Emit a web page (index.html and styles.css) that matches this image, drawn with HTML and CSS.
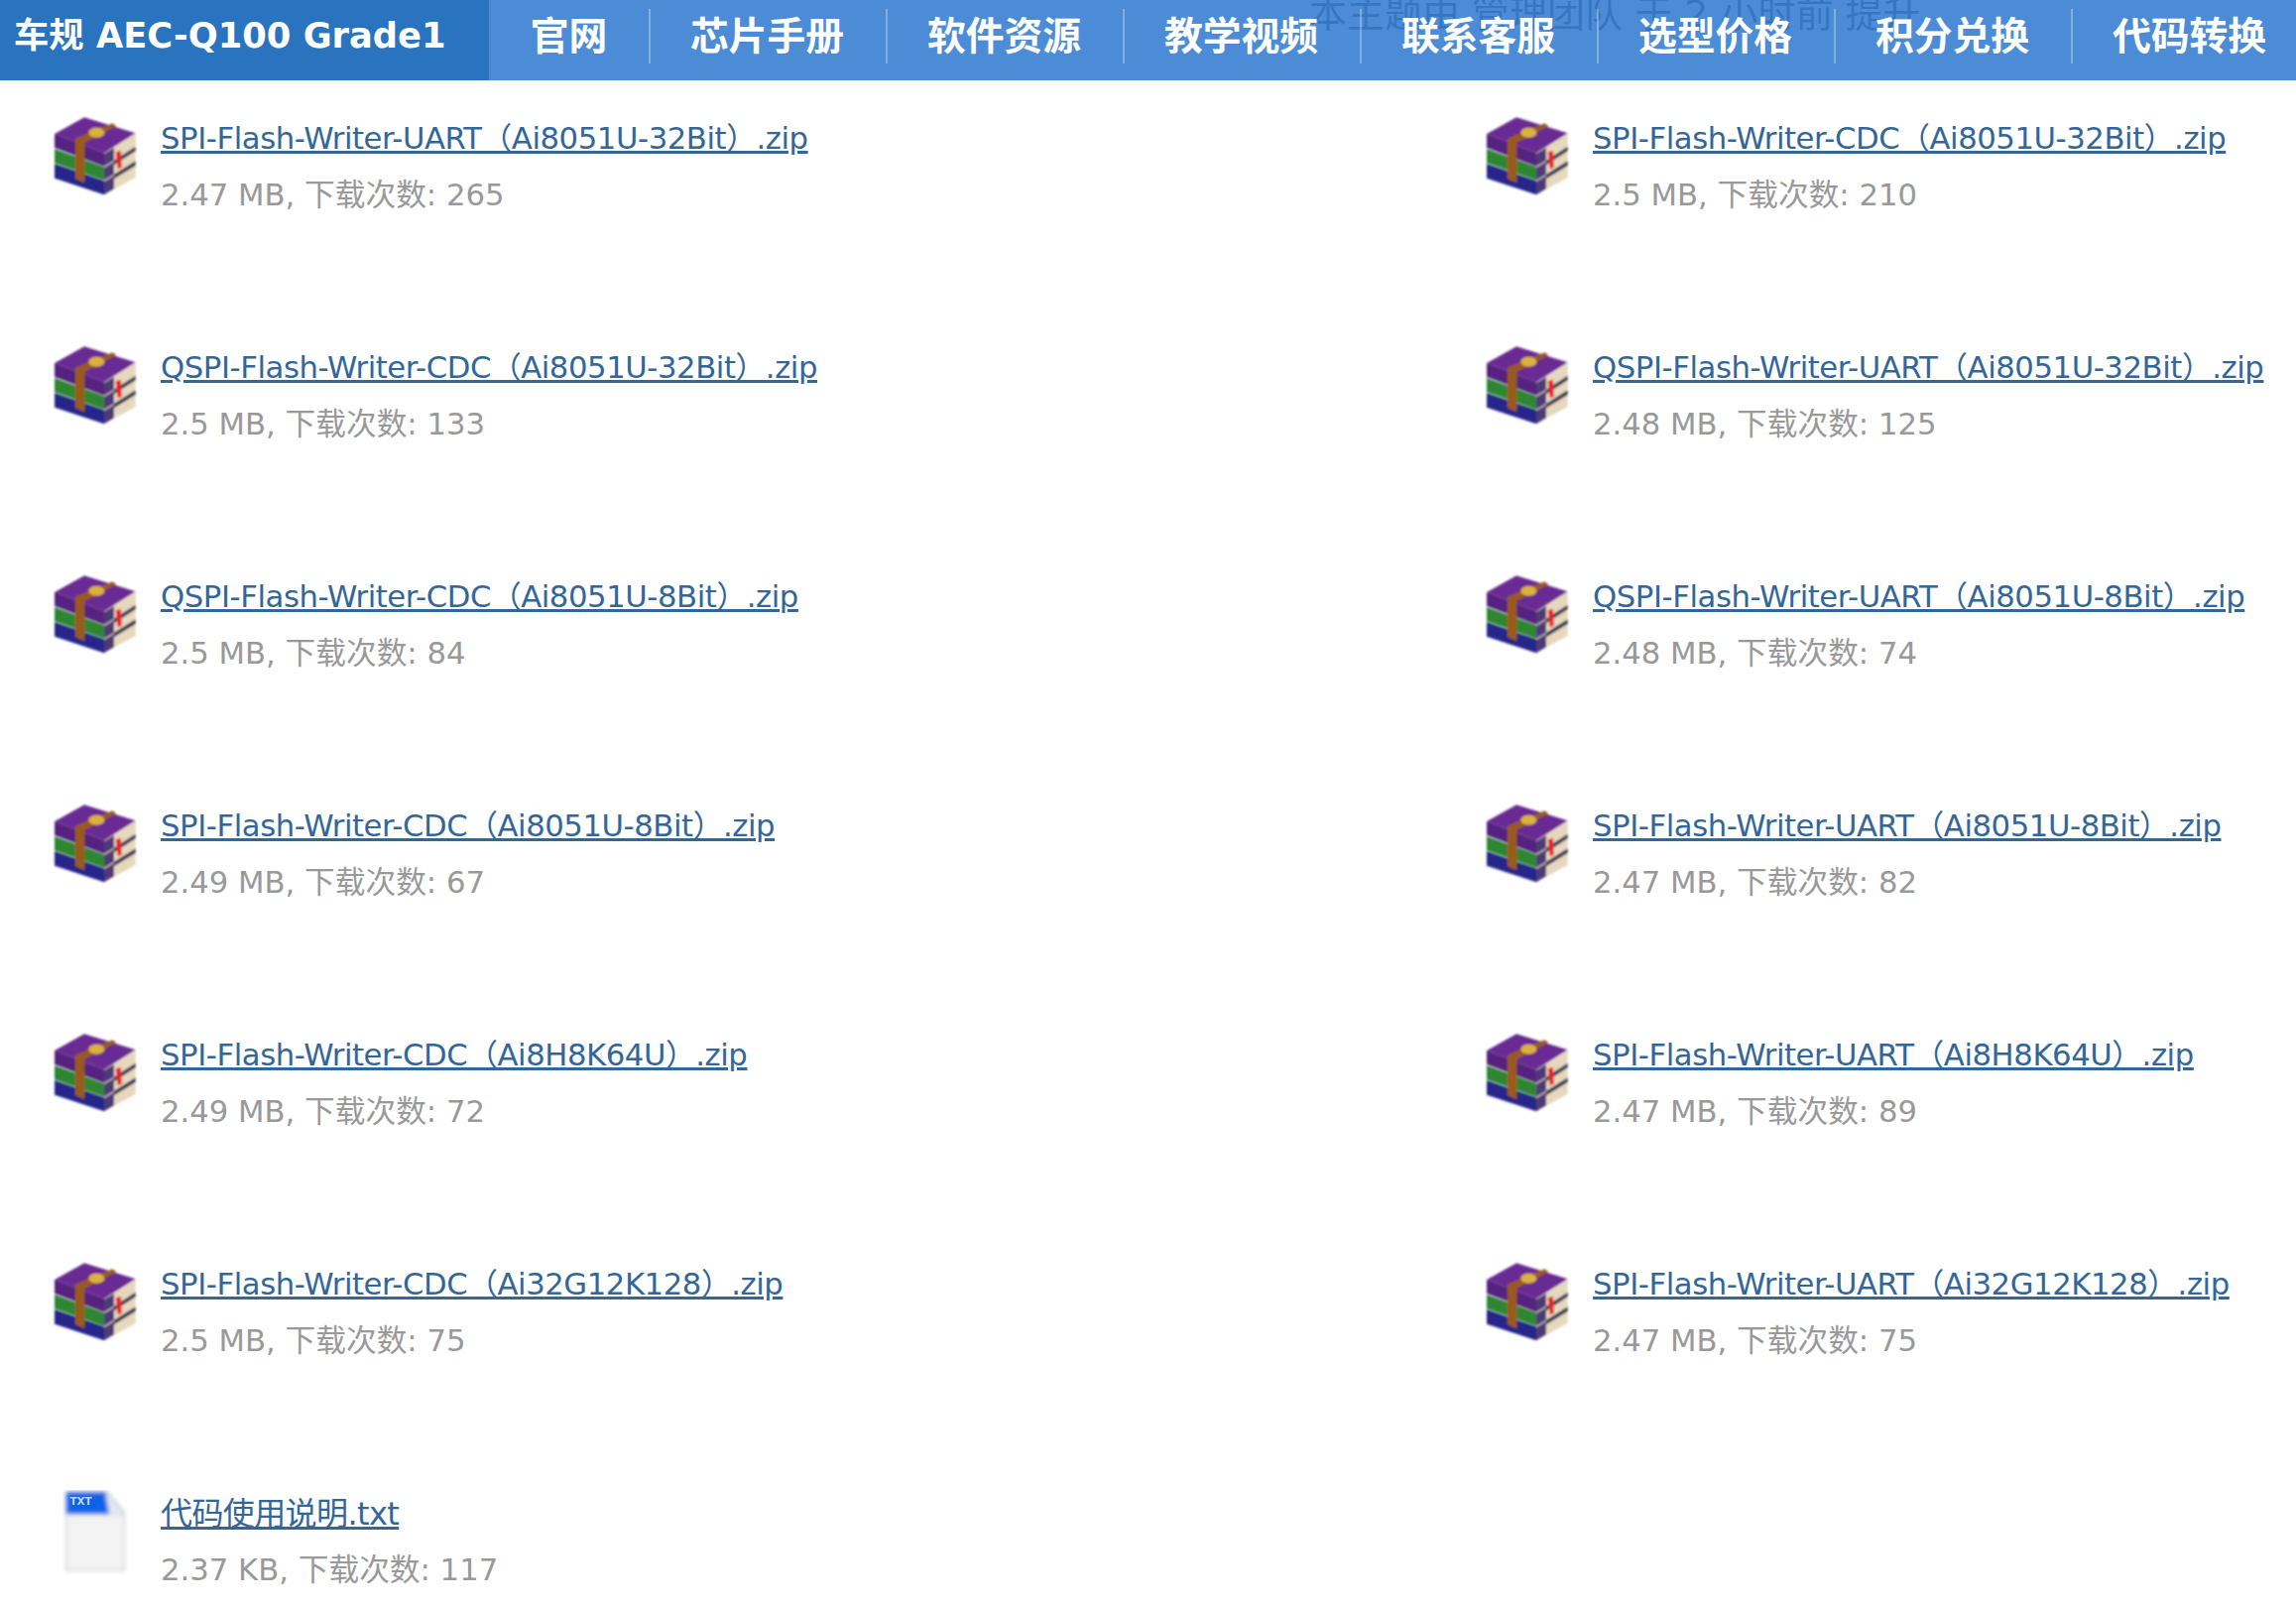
FILE: index.html
```html
<!DOCTYPE html>
<html lang="en">
<head>
    <meta charset="UTF-8">
    <title>Attachments</title>
    <link rel="stylesheet" href="styles.css">
</head>
<body>
    <svg class="defs" width="0" height="0">
        <defs>
            <filter id="soft"><feGaussianBlur stdDeviation="2.4"/></filter>
            <symbol id="icon-rar" viewBox="0 0 360 300">
                <g filter="url(#soft)">
                    <path d="M195 148 290 88V222L195 274Z" fill="#e6d8bd"/>
                    <path d="M225 170 290 128V142L225 184ZM225 212 290 172V186L225 226Z" fill="#3d3a55"/>
                    <path d="M45 90 135 40 290 88 195 148Z" fill="#6a2a94"/>
                    <path d="M45 90 195 148V188L45 132Z" fill="#56207f"/>
                    <path d="M45 135 195 190V230L45 178Z" fill="#2f8633"/>
                    <path d="M45 180 195 232V274L45 224Z" fill="#25258a"/>
                    <path d="M195 150 225 132V170L195 188ZM195 192 225 174V212L195 230ZM195 234 225 216V256L195 274Z" fill="#4d3a78"/>
                    <path d="M108 104 220 58 232 66 136 116V238L108 226Z" fill="#9a5a1e"/>
                    <ellipse cx="172" cy="86" rx="24" ry="15" fill="#dcb23a"/>
                    <path d="M230 145 246 140 248 192 236 196Z" fill="#e8202a"/>
                </g>
            </symbol>
            <symbol id="icon-txt" viewBox="0 0 70 90">
                <g filter="url(#soft)">
                    <path d="M4 2H48L66 24V86H4Z" fill="#f3f3f3" stroke="#d6d6d6" stroke-width="2"/>
                    <path d="M4 2H46L66 26H4Z" fill="#0a63e6"/>
                    <path d="M46 2 66 26H50Z" fill="#e4e8f0"/>
                </g>
                <text x="8" y="16" class="icon-label">TXT</text>
            </symbol>
        </defs>
    </svg>

    <div class="stage">
        <div class="bumped">本主题由 管理团队 于 2 小时前 提升</div>
        <nav class="topnav">
            <a class="brand" href="#">车规 AEC-Q100 Grade1</a>
            <a class="nav-item" href="#">官网</a>
            <a class="nav-item" href="#">芯片手册</a>
            <a class="nav-item" href="#">软件资源</a>
            <a class="nav-item" href="#">教学视频</a>
            <a class="nav-item" href="#">联系客服</a>
            <a class="nav-item" href="#">选型价格</a>
            <a class="nav-item" href="#">积分兑换</a>
            <a class="nav-item" href="#">代码转换</a>
        </nav>
    </div>

    <div class="files">
        <div class="file">
            <svg class="file-icon"><use href="#icon-rar"/></svg>
            <div class="file-info">
                <a href="#">SPI-Flash-Writer-UART（Ai8051U-32Bit）.zip</a>
                <p>2.47 MB, 下载次数: 265</p>
            </div>
        </div>
        <div class="file">
            <svg class="file-icon"><use href="#icon-rar"/></svg>
            <div class="file-info">
                <a href="#">SPI-Flash-Writer-CDC（Ai8051U-32Bit）.zip</a>
                <p>2.5 MB, 下载次数: 210</p>
            </div>
        </div>
        <div class="file">
            <svg class="file-icon"><use href="#icon-rar"/></svg>
            <div class="file-info">
                <a href="#">QSPI-Flash-Writer-CDC（Ai8051U-32Bit）.zip</a>
                <p>2.5 MB, 下载次数: 133</p>
            </div>
        </div>
        <div class="file">
            <svg class="file-icon"><use href="#icon-rar"/></svg>
            <div class="file-info">
                <a href="#">QSPI-Flash-Writer-UART（Ai8051U-32Bit）.zip</a>
                <p>2.48 MB, 下载次数: 125</p>
            </div>
        </div>
        <div class="file">
            <svg class="file-icon"><use href="#icon-rar"/></svg>
            <div class="file-info">
                <a href="#">QSPI-Flash-Writer-CDC（Ai8051U-8Bit）.zip</a>
                <p>2.5 MB, 下载次数: 84</p>
            </div>
        </div>
        <div class="file">
            <svg class="file-icon"><use href="#icon-rar"/></svg>
            <div class="file-info">
                <a href="#">QSPI-Flash-Writer-UART（Ai8051U-8Bit）.zip</a>
                <p>2.48 MB, 下载次数: 74</p>
            </div>
        </div>
        <div class="file">
            <svg class="file-icon"><use href="#icon-rar"/></svg>
            <div class="file-info">
                <a href="#">SPI-Flash-Writer-CDC（Ai8051U-8Bit）.zip</a>
                <p>2.49 MB, 下载次数: 67</p>
            </div>
        </div>
        <div class="file">
            <svg class="file-icon"><use href="#icon-rar"/></svg>
            <div class="file-info">
                <a href="#">SPI-Flash-Writer-UART（Ai8051U-8Bit）.zip</a>
                <p>2.47 MB, 下载次数: 82</p>
            </div>
        </div>
        <div class="file">
            <svg class="file-icon"><use href="#icon-rar"/></svg>
            <div class="file-info">
                <a href="#">SPI-Flash-Writer-CDC（Ai8H8K64U）.zip</a>
                <p>2.49 MB, 下载次数: 72</p>
            </div>
        </div>
        <div class="file">
            <svg class="file-icon"><use href="#icon-rar"/></svg>
            <div class="file-info">
                <a href="#">SPI-Flash-Writer-UART（Ai8H8K64U）.zip</a>
                <p>2.47 MB, 下载次数: 89</p>
            </div>
        </div>
        <div class="file">
            <svg class="file-icon"><use href="#icon-rar"/></svg>
            <div class="file-info">
                <a href="#">SPI-Flash-Writer-CDC（Ai32G12K128）.zip</a>
                <p>2.5 MB, 下载次数: 75</p>
            </div>
        </div>
        <div class="file">
            <svg class="file-icon"><use href="#icon-rar"/></svg>
            <div class="file-info">
                <a href="#">SPI-Flash-Writer-UART（Ai32G12K128）.zip</a>
                <p>2.47 MB, 下载次数: 75</p>
            </div>
        </div>
        <div class="file">
            <svg class="file-icon txt"><use href="#icon-txt"/></svg>
            <div class="file-info">
                <a class="cn-link" href="#">代码使用说明.txt</a>
                <p>2.37 KB, 下载次数: 117</p>
            </div>
        </div>
    </div>
</body>
</html>
```

FILE: styles.css
```css
body {
    margin: 0;
    background: #fff;
    font-family: "DejaVu Sans", "Noto Sans CJK SC", sans-serif;
    overflow: hidden;
}

.defs {
    position: absolute;
}

.icon-label {
    font-size: 11px;
    font-weight: bold;
    fill: #bcd6ff;
}

.stage {
    position: relative;
    height: 81px;
    overflow: hidden;
}

/* text of the page scrolled under the translucent bar */
.bumped {
    position: absolute;
    left: 1320px;
    top: -17px;
    font-size: 38px;
    color: #222;
    white-space: nowrap;
}

.topnav {
    position: relative;
    display: flex;
    height: 81px;
    background: rgba(56, 128, 209, 0.9);
}

.topnav a {
    flex: none;
    color: #fff;
    font-weight: bold;
    text-decoration: none;
    white-space: nowrap;
}

.brand {
    box-sizing: border-box;
    width: 493px;
    padding-left: 14px;
    font-size: 35.3px;
    line-height: 72px;
    background: #2a74bf;
}

.nav-item {
    position: relative;
    width: 239px;
    text-align: center;
    font-size: 38.8px;
    line-height: 74px;
}

.nav-item + .nav-item::before {
    content: "";
    position: absolute;
    left: 0;
    top: 9px;
    height: 55px;
    border-left: 2px solid rgba(255, 255, 255, 0.3);
}

.brand + .nav-item {
    width: 161px;
}

.files {
    display: grid;
    grid-template-columns: 1444px 1fr;
    row-gap: 128px;
    padding: 36px 0 0 40px;
}

.file {
    display: flex;
}

.file-icon {
    flex: none;
    width: 120px;
    height: 100px;
    margin-top: -12px;
    margin-right: -12px;
}

.file-icon.txt {
    width: 66px;
    height: 85px;
    margin: -1px 19px 0 23px;
}

.file-info {
    font-size: 30.7px;
    margin-left: 14px;
}

.file-info a {
    display: inline-block;
    color: #336699;
    letter-spacing: -0.42px;
    text-decoration: underline;
    line-height: 46px;
    white-space: nowrap;
}

.file-info a.cn-link {
    font-size: 32px;
    letter-spacing: -0.6px;
}

.file-info p {
    margin: 11px 0 0;
    color: #999;
    line-height: 46px;
}
```
